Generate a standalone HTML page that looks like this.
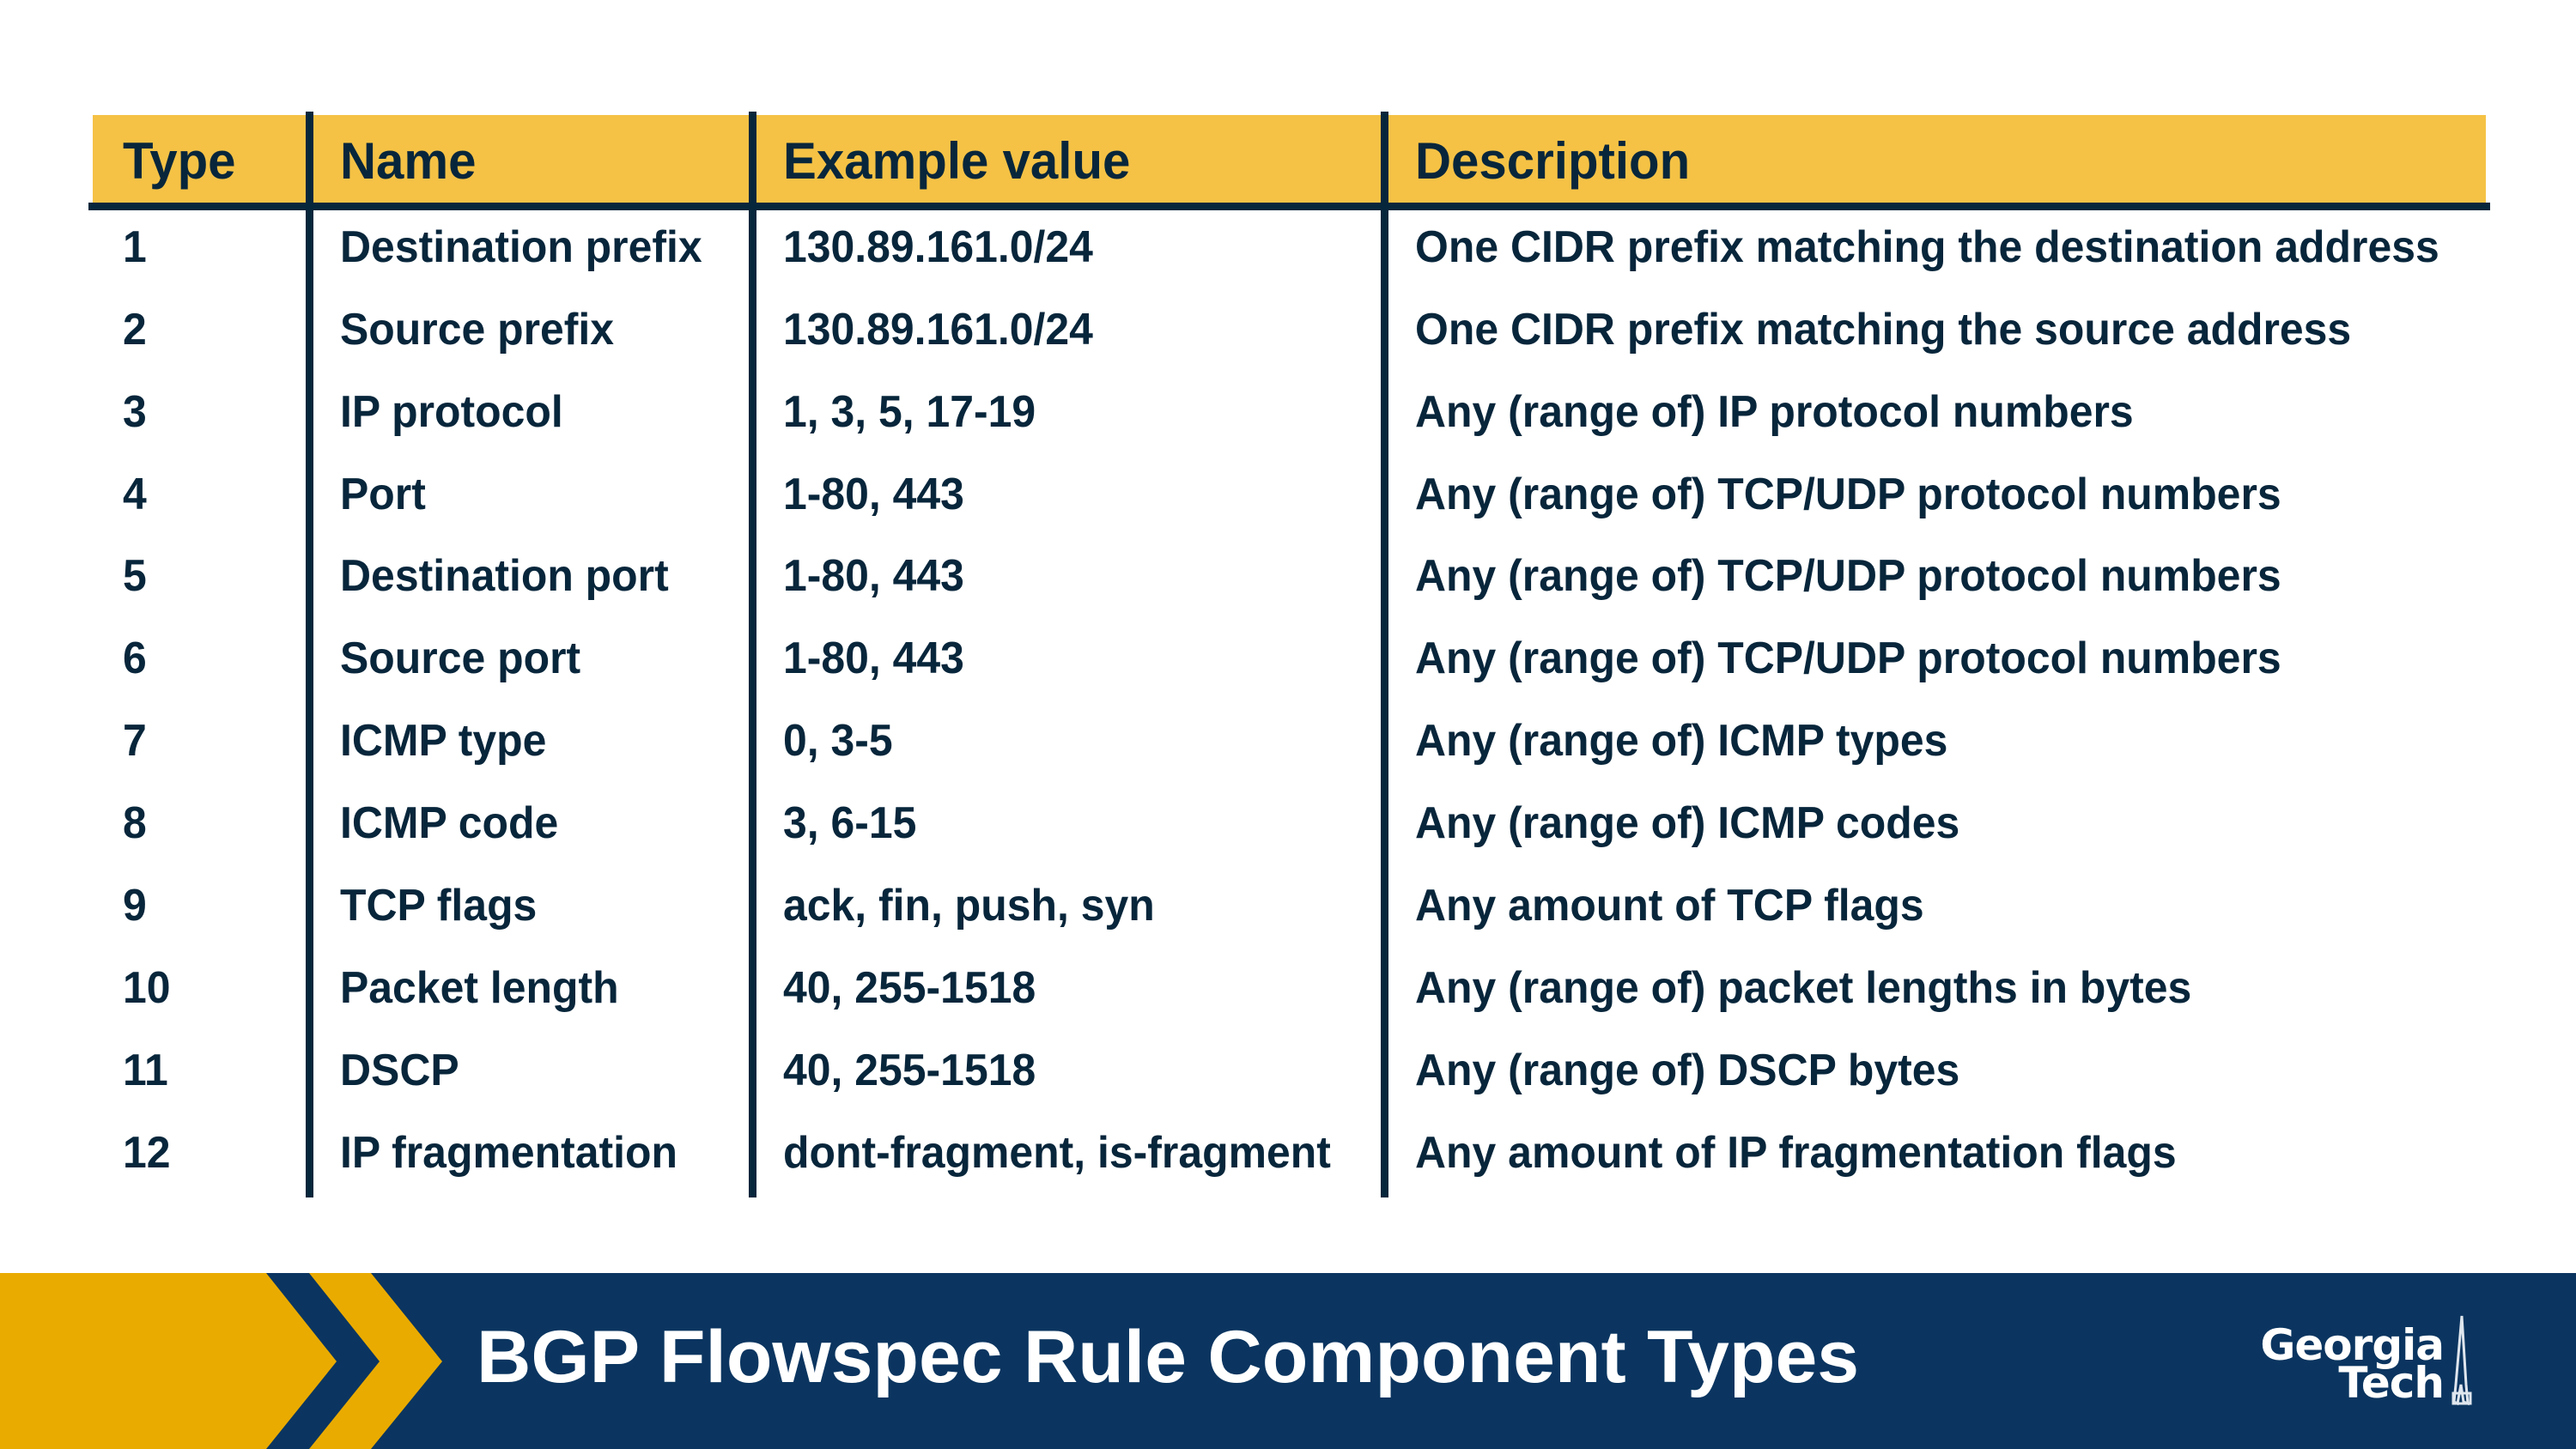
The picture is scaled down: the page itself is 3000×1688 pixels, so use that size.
<!DOCTYPE html>
<html><head><meta charset="utf-8"><style>
*{margin:0;padding:0;box-sizing:border-box}
body{width:3000px;height:1688px;background:#fff;position:relative;overflow:hidden;font-family:"Liberation Sans",Arial,sans-serif;font-weight:bold;color:#08263b}
.a{position:absolute}
.t{position:absolute;white-space:nowrap;line-height:1;font-size:52px;transform:scaleX(0.96);transform-origin:0 0;margin-top:2px}
.h{font-size:60px;transform:scaleX(0.97)}
.v{position:absolute;background:#06263b;width:9px;top:130px;height:1265px}
</style></head><body>
<div class="a" style="left:108px;top:134px;width:2787px;height:103px;background:#f5c245"></div>
<div class="a" style="left:103px;top:236px;width:2797px;height:9px;background:#06263b"></div>
<div class="v" style="left:356px"></div>
<div class="v" style="left:872px"></div>
<div class="v" style="left:1608px"></div>

<div class="t h" style="left:143px;top:156px">Type</div>
<div class="t h" style="left:396px;top:156px">Name</div>
<div class="t h" style="left:912px;top:156px">Example value</div>
<div class="t h" style="left:1648px;top:156px">Description</div>

<div class="t" style="left:143px;top:260px">1</div><div class="t" style="left:396px;top:260px">Destination prefix</div><div class="t" style="left:912px;top:260px">130.89.161.0/24</div><div class="t" style="left:1648px;top:260px">One CIDR prefix matching the destination address</div>
<div class="t" style="left:143px;top:356px">2</div><div class="t" style="left:396px;top:356px">Source prefix</div><div class="t" style="left:912px;top:356px">130.89.161.0/24</div><div class="t" style="left:1648px;top:356px">One CIDR prefix matching the source address</div>
<div class="t" style="left:143px;top:452px">3</div><div class="t" style="left:396px;top:452px">IP protocol</div><div class="t" style="left:912px;top:452px">1, 3, 5, 17-19</div><div class="t" style="left:1648px;top:452px">Any (range of) IP protocol numbers</div>
<div class="t" style="left:143px;top:548px">4</div><div class="t" style="left:396px;top:548px">Port</div><div class="t" style="left:912px;top:548px">1-80, 443</div><div class="t" style="left:1648px;top:548px">Any (range of) TCP/UDP protocol numbers</div>
<div class="t" style="left:143px;top:643px">5</div><div class="t" style="left:396px;top:643px">Destination port</div><div class="t" style="left:912px;top:643px">1-80, 443</div><div class="t" style="left:1648px;top:643px">Any (range of) TCP/UDP protocol numbers</div>
<div class="t" style="left:143px;top:739px">6</div><div class="t" style="left:396px;top:739px">Source port</div><div class="t" style="left:912px;top:739px">1-80, 443</div><div class="t" style="left:1648px;top:739px">Any (range of) TCP/UDP protocol numbers</div>
<div class="t" style="left:143px;top:835px">7</div><div class="t" style="left:396px;top:835px">ICMP type</div><div class="t" style="left:912px;top:835px">0, 3-5</div><div class="t" style="left:1648px;top:835px">Any (range of) ICMP types</div>
<div class="t" style="left:143px;top:931px">8</div><div class="t" style="left:396px;top:931px">ICMP code</div><div class="t" style="left:912px;top:931px">3, 6-15</div><div class="t" style="left:1648px;top:931px">Any (range of) ICMP codes</div>
<div class="t" style="left:143px;top:1027px">9</div><div class="t" style="left:396px;top:1027px">TCP flags</div><div class="t" style="left:912px;top:1027px">ack, fin, push, syn</div><div class="t" style="left:1648px;top:1027px">Any amount of TCP flags</div>
<div class="t" style="left:143px;top:1123px">10</div><div class="t" style="left:396px;top:1123px">Packet length</div><div class="t" style="left:912px;top:1123px">40, 255-1518</div><div class="t" style="left:1648px;top:1123px">Any (range of) packet lengths in bytes</div>
<div class="t" style="left:143px;top:1219px">11</div><div class="t" style="left:396px;top:1219px">DSCP</div><div class="t" style="left:912px;top:1219px">40, 255-1518</div><div class="t" style="left:1648px;top:1219px">Any (range of) DSCP bytes</div>
<div class="t" style="left:143px;top:1315px">12</div><div class="t" style="left:396px;top:1315px">IP fragmentation</div><div class="t" style="left:912px;top:1315px">dont-fragment, is-fragment</div><div class="t" style="left:1648px;top:1315px">Any amount of IP fragmentation flags</div>

<svg class="a" style="left:0;top:1483px" width="3000" height="205" viewBox="0 0 3000 205">
<rect width="3000" height="205" fill="#0b3560"/>
<polygon points="0,0 310,0 392,103 310,205 0,205" fill="#eaab00"/>
<polygon points="360,0 432,0 515,103 432,205 360,205 442,103" fill="#eaab00"/>
<g fill="none" stroke="#dfe6ee" stroke-width="3">
<path d="M2867,50 L2860,130 L2858,150 L2862,152 L2866,130 L2869,150 L2874,152 L2872,130 Z"/>
<rect x="2857" y="140" width="20" height="12"/>
</g>
</svg>
<div class="a" style="left:555px;top:1538px;font-size:86px;line-height:1;color:#fff;white-space:nowrap;transform:scaleX(1.02);transform-origin:0 0">BGP Flowspec Rule Component Types</div>
<div class="a" style="left:2600px;top:1545px;width:246px;text-align:right;color:#fff;font-size:50px;line-height:44px;letter-spacing:-1px;font-family:'DejaVu Sans','Liberation Sans',sans-serif">Georgia<br>Tech</div>
</body></html>
